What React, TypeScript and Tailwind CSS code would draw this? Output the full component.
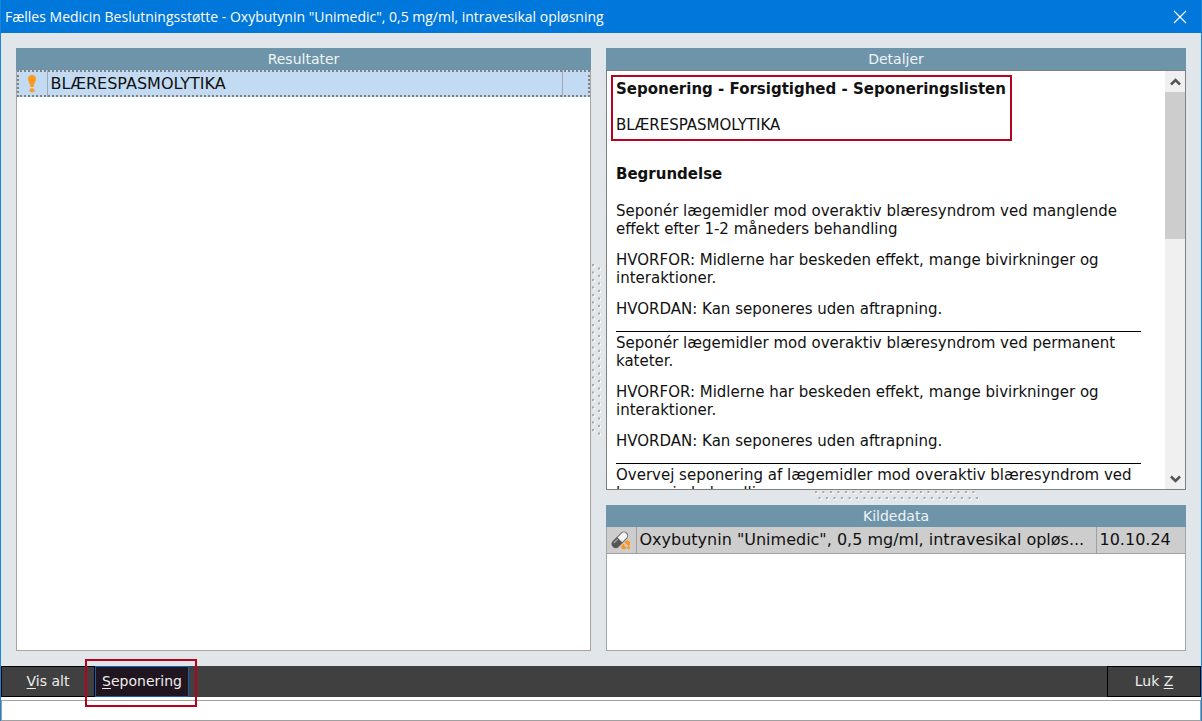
import React from 'react'

interface PanelProps {
  title: string
  className?: string
  children: React.ReactNode
}

interface Advice {
  intro: string
  why: string
  how: string
}

const why = 'HVORFOR: Midlerne har beskeden effekt, mange bivirkninger og interaktioner.'
const how = 'HVORDAN: Kan seponeres uden aftrapning.'

const advices: Advice[] = [
  { intro: 'Seponér lægemidler mod overaktiv blæresyndrom ved manglende effekt efter 1-2 måneders behandling', why, how },
  { intro: 'Seponér lægemidler mod overaktiv blæresyndrom ved permanent kateter.', why, how },
  { intro: 'Overvej seponering af lægemidler mod overaktiv blæresyndrom ved langvarig behandling', why, how },
]

const Panel: React.FC<PanelProps> = ({ title, className = '', children }) => (
  <section className={`flex min-h-0 min-w-0 flex-col ${className}`}>
    <h2 className="h-[22px] shrink-0 bg-[#6d94a9] text-center text-sm leading-[22px] text-[#f0f4f6]">{title}</h2>
    {children}
  </section>
)

const WarningIcon = () => (
  <svg width="10" height="18" viewBox="0 0 10 18" fill="#ff9a1f" className="mx-auto" aria-hidden="true">
    <path d="M5 0C2.500 0 1 1.500 1 3.800c0 2.200 1.800 4.700 2.500 8.200h3C7.200 8.500 9 6 9 3.800 9 1.500 7.500 0 5 0Z" />
    <ellipse cx="5" cy="15.300" rx="2.600" ry="2" />
  </svg>
)

const PillIcon = () => (
  <svg width="20" height="20" viewBox="0 0 20 20" className="mx-auto" aria-hidden="true">
    <g transform="rotate(-45 9 10)">
      <rect x="-.5" y="6" width="19" height="7.500" rx="3.700" fill="#f4f4f4" stroke="#6d6d6d" />
      <path d="M9 6H3.200a3.700 3.700 0 0 0 0 7.500H9Z" fill="#555" />
      <path d="M2.500 7.800H8" stroke="#aaa" strokeWidth="1.200" />
    </g>
    <path d="M10.500 18.500c-.6-2 .2-3.800 2-4.800l2.800 4-1 1.300c-1.400.5-2.900.4-3.800-.5Z" fill="#ff9419" />
    <path d="M13.500 12.500c.8-2 3.200-2.900 4.800-1.200 1.300 1.700 1.200 3.500-.5 5Z" fill="#ff9419" />
    <path d="M15.500 17.800l2.700-1.800.9 2.200-1.500 1.300Z" fill="#ff9419" />
  </svg>
)

const Grip: React.FC<{ vertical?: boolean }> = ({ vertical }) => {
  const id = vertical ? 'grip-v' : 'grip-h'
  return (
    <svg
      width={vertical ? 11 : 165}
      height={vertical ? 173 : 11}
      aria-hidden="true"
    >
      <defs>
        <pattern id={id} width={vertical ? 12 : 7.5} height={vertical ? 7.5 : 12} patternUnits="userSpaceOnUse">
          <rect x="2" y="2" width="2" height="2" fill="#fff" />
          <rect x="1" y="1" width="2" height="2" fill="#a3a6a9" />
          <rect x={vertical ? 8 : 5.5} y={vertical ? 5.5 : 8} width="2" height="2" fill="#fff" />
          <rect x={vertical ? 7 : 4.5} y={vertical ? 4.5 : 7} width="2" height="2" fill="#a3a6a9" />
        </pattern>
      </defs>
      <rect width="100%" height="100%" fill={`url(#${id})`} />
    </svg>
  )
}

const Chevron: React.FC<{ down?: boolean }> = ({ down }) => (
  <svg width="11" height="8" viewBox="0 0 11 8" fill="none" stroke="#555" strokeWidth="2.500" aria-hidden="true">
    <path d={down ? 'M1 1.500l4.500 4.500L10 1.500' : 'M1 6.500L5.500 2 10 6.500'} />
  </svg>
)

const ScrollBar = () => (
  <div className="flex w-5 shrink-0 flex-col bg-[#f0f0f0]">
    <button aria-label="Rul op" className="flex h-[21px] items-center justify-center"><Chevron /></button>
    <div className="flex-1">
      <div className="h-[147px] bg-[#cdcdcd]" />
    </div>
    <button aria-label="Rul ned" className="flex h-[21px] items-center justify-center"><Chevron down /></button>
  </div>
)

const Details = () => (
  <div className="flex min-h-0 flex-1 border border-[#808080] bg-white">
    <div className="min-w-0 flex-1 overflow-hidden pt-[9px] pr-6 pl-[9px] text-[15px] leading-[18px]">
      <div className="relative w-fit">
        <h3 className="font-bold">Seponering - Forsigtighed - Seponeringslisten</h3>
        <p className="mt-[18px]">BLÆRESPASMOLYTIKA</p>
        <div className="pointer-events-none absolute -top-[5px] -right-1.5 -bottom-[7px] -left-[5px] border-2 border-[#b8001f]" />
      </div>
      <h3 className="mt-[31px] mb-[19px] font-bold">Begrundelse</h3>
      {advices.map((advice, i) => (
        <div key={advice.intro} className={i > 0 ? 'mt-[13px] border-t border-black pt-0.5' : ''}>
          <p>{advice.intro}</p>
          <p className="mt-[13px]">{advice.why}</p>
          <p className="mt-[13px]">{advice.how}</p>
        </div>
      ))}
    </div>
    <ScrollBar />
  </div>
)

export default function App() {
  return (
    <div className="flex h-screen flex-col border-x border-[#1a83da] bg-[#e1e6eb] font-['DejaVu_Sans',sans-serif] text-[#111]">
      <header className="flex h-[33px] shrink-0 items-center justify-between bg-[#0077da] pr-3.5 pl-1 text-white">
        <h1 className="font-['Open_Sans','Noto_Sans',sans-serif] text-sm">
          Fælles Medicin Beslutningsstøtte - Oxybutynin "Unimedic", 0,5 mg/ml, intravesikal opløsning
        </h1>
        <button aria-label="Luk vindue">
          <svg width="14" height="14" viewBox="0 0 14 14" stroke="currentColor" strokeWidth="1.200" aria-hidden="true">
            <path d="M1 1l12 12M13 1L1 13" />
          </svg>
        </button>
      </header>

      <main className="flex min-h-0 flex-1 p-[15px]">
        <Panel title="Resultater" className="flex-[575]">
          <div className="flex-1 border border-t-0 border-[#a5a5a5] bg-white">
            <table className="w-full table-fixed border-collapse text-base">
              <tbody>
                <tr className="h-[27px] bg-[#c2dbf3] outline-2 -outline-offset-2 outline-dotted outline-[#808080]">
                  <td className="w-[30px] border-r border-[#a0a8b0] p-0"><WarningIcon /></td>
                  <td className="truncate px-[3px] py-0">BLÆRESPASMOLYTIKA</td>
                  <td className="w-7 border-l border-[#a0a8b0] p-0" />
                </tr>
              </tbody>
            </table>
          </div>
        </Panel>

        <div className="flex w-[15px] shrink-0 items-center"><Grip vertical /></div>

        <div className="flex min-w-0 flex-[580] flex-col">
          <Panel title="Detaljer" className="flex-1"><Details /></Panel>
          <div className="flex h-[15px] shrink-0 justify-center"><Grip /></div>
          <Panel title="Kildedata" className="h-[146px] shrink-0">
            <div className="flex-1 border border-t-0 border-[#a5a5a5] bg-white">
              <table className="w-full table-fixed border-collapse text-base">
                <tbody>
                  <tr className="h-[26px] border-b border-[#a0a0a0] bg-[#cdcdcd]">
                    <td className="w-[29px] border-r border-[#a0a0a0] p-0"><PillIcon /></td>
                    <td className="px-[3px] py-0 whitespace-nowrap">Oxybutynin "Unimedic", 0,5 mg/ml, intravesikal opløs...</td>
                    <td className="w-[89px] border-l border-[#a0a0a0] px-[3px] py-0">10.10.24</td>
                  </tr>
                </tbody>
              </table>
            </div>
          </Panel>
        </div>
      </main>

      <footer className="shrink-0">
        <div className="flex h-[31px] bg-[#404040] text-sm text-[#ededed]">
          <button className="w-[94px] border border-black pb-0.5"><u className="underline-offset-2">V</u>is alt</button>
          <div className="relative flex">
            <button className="w-[94px] border border-[#1263b5] bg-[#21151f] pb-0.5"><u className="underline-offset-2">S</u>eponering</button>
            <div className="pointer-events-none absolute -top-[7px] -right-2 -bottom-2.5 -left-2.5 border-2 border-[#b8001f]" />
          </div>
          <button className="ml-auto w-[94px] border border-black pb-0.5">Luk <u className="underline-offset-2">Z</u></button>
        </div>
        <div className="bg-white pt-[3px]">
          <input aria-label="Status" readOnly className="block h-[21px] w-full border border-[#a0a0a0] bg-white px-1 text-sm" />
        </div>
      </footer>
    </div>
  )
}
